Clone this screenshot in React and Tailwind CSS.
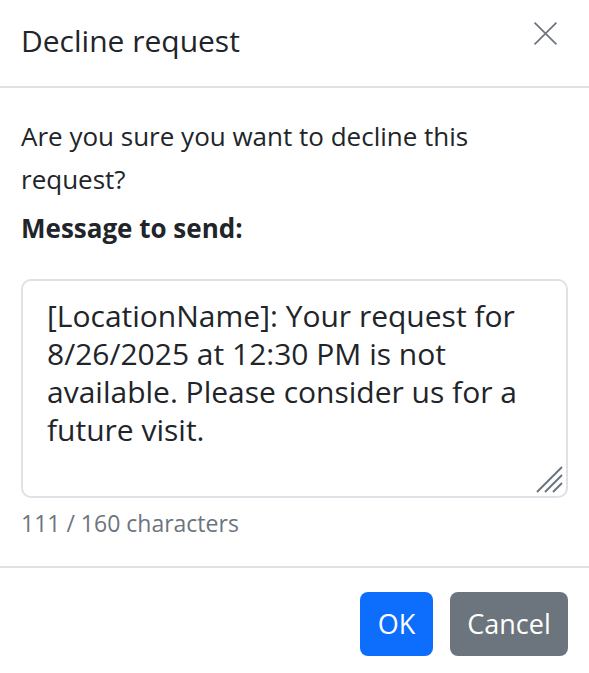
import React from "react";

export default function App() {
  const message =
    "[LocationName]: Your request for 8/26/2025 at 12:30 PM is not available. Please consider us for a future visit.";

  return (
    <div
      className="w-[589px] h-[673px] bg-white text-[#212529] flex flex-col"
      style={{ fontFamily: '"Open Sans", "Noto Sans", sans-serif' }}
    >
      {/* Header */}
      <div className="h-[88px] flex items-center justify-between pl-[21px] pr-[30px] border-b-2 border-[#dee2e6]">
        <h5 className="text-[30px] leading-none -mt-[4px]">Decline request</h5>
        <button className="w-[28px] h-[28px] flex items-center justify-center -mt-[20px]">
          <svg width="25" height="25" viewBox="0 0 16 16" fill="none" stroke="#6c757d" strokeWidth="1.1">
            <path d="M1 1 15 15M15 1 1 15" />
          </svg>
        </button>
      </div>

      {/* Body */}
      <div className="px-[21px] pt-[27px]">
        <p className="text-[26px] leading-[43px]">
          Are you sure you want to decline this request?
        </p>
        <p className="text-[26px] font-bold leading-[43px] mt-[6px]">Message to send:</p>
        <div className="relative mt-[29px] h-[219px] border-2 border-[#dee2e6] rounded-[10px] px-[24px] pt-[16px]">
          <textarea
            readOnly
            value={message}
            className="w-full h-full resize-none outline-none text-[30px] leading-[38px] bg-transparent"
          />
          <svg className="absolute right-[3px] bottom-[3px]" width="28" height="28" viewBox="0 0 28 28" stroke="#6c757d" strokeWidth="2">
            <path d="M27 2 2 27M27 10 10 27M27 18 18 27" />
          </svg>
        </div>
        <p className="text-[23px] text-[#6c757d] mt-[10px] leading-[30px]">111 / 160 characters</p>
      </div>

      {/* Footer */}
      <div className="mt-[28px] border-t-2 border-[#dee2e6] flex justify-end gap-[17px] pr-[21px] pt-[24px]">
        <button className="h-[64px] w-[73px] rounded-[8px] bg-[#0d6efd] text-white text-[27px]">OK</button>
        <button className="h-[64px] w-[118px] rounded-[8px] bg-[#6c757d] text-white text-[27px]">Cancel</button>
      </div>
    </div>
  );
}
